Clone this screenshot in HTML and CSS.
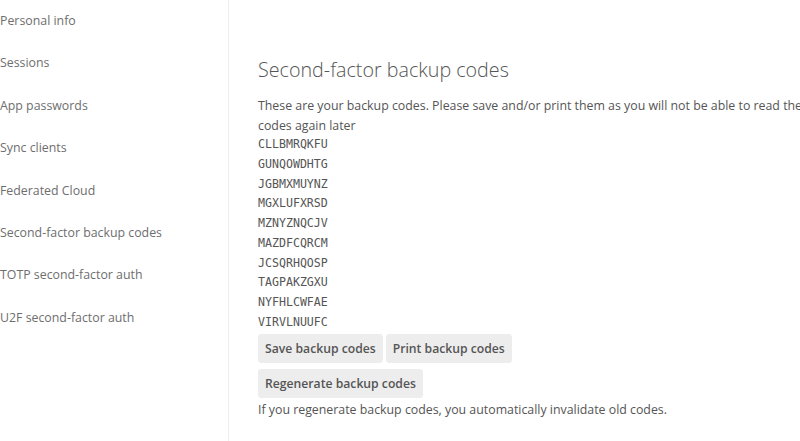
FILE: index.html
```html
<!DOCTYPE html>
<html lang="en">
<head>
  <meta charset="UTF-8">
  <meta name="viewport" content="width=device-width, initial-scale=1.0">
  <title>Personal settings</title>
  <link rel="stylesheet" href="styles.css">
</head>
<body>
  <div class="layout">
    <nav class="app-navigation">
      <ul>
        <li><a href="#">Personal info</a></li>
        <li><a href="#">Sessions</a></li>
        <li><a href="#">App passwords</a></li>
        <li><a href="#">Sync clients</a></li>
        <li><a href="#">Federated Cloud</a></li>
        <li><a href="#">Second-factor backup codes</a></li>
        <li><a href="#">TOTP second-factor auth</a></li>
        <li><a href="#">U2F second-factor auth</a></li>
      </ul>
    </nav>

    <main class="app-content">
      <div class="section">
        <h2>Second-factor backup codes</h2>
        <p class="intro">These are your backup codes. Please save and/or print them as you will not be able to read the codes again later</p>
        <ul class="backup-codes">
          <li>CLLBMRQKFU</li>
          <li>GUNQOWDHTG</li>
          <li>JGBMXMUYNZ</li>
          <li>MGXLUFXRSD</li>
          <li>MZNYZNQCJV</li>
          <li>MAZDFCQRCM</li>
          <li>JCSQRHQOSP</li>
          <li>TAGPAKZGXU</li>
          <li>NYFHLCWFAE</li>
          <li>VIRVLNUUFC</li>
        </ul>
        <div class="button-row">
          <button>Save backup codes</button>
          <button>Print backup codes</button>
        </div>
        <div class="button-row">
          <button>Regenerate backup codes</button>
        </div>
        <p>If you regenerate backup codes, you automatically invalidate old codes.</p>
      </div>
    </main>
  </div>
</body>
</html>
```

FILE: styles.css
```css
body {
  margin: 0;
  font-family: 'Open Sans', 'Liberation Sans', sans-serif;
  font-size: 12.35px;
  color: #555;
  background: #fff;
  overflow: hidden;
}

.layout {
  display: flex;
  min-height: 441px;
}

.app-navigation {
  width: 229px;
  flex-shrink: 0;
  border-right: 1px solid #eee;
  box-sizing: border-box;
}

.app-navigation ul {
  list-style: none;
  margin: 0;
  padding: 0;
}

.app-navigation a {
  display: block;
  line-height: 42.4px;
  color: #6e6e6e;
  text-decoration: none;
}

.app-content {
  flex: 1;
  min-width: 0;
}

.section {
  padding: 55px 0 0 29px;
}

.section h2 {
  margin: 0 0 11px;
  font-size: 19.7px;
  font-weight: 300;
  line-height: 30px;
  color: #555;
}

.section p {
  margin: 0;
  line-height: 20px;
}

.section .intro {
  margin-right: -14px;
}

.backup-codes {
  list-style: none;
  margin: -1px 0 0;
  padding: 0;
  font-family: 'DejaVu Sans Mono', monospace;
  font-size: 11.6px;
  line-height: 19.75px;
  color: #555;
}

.button-row {
  display: flex;
  gap: 3px;
  margin: 1px 0 2px;
}

.button-row + .button-row {
  margin-top: 6px;
}

.button-row button {
  font-family: inherit;
  font-size: 12.2px;
  font-weight: 600;
  color: #555;
  background: #ededed;
  border: 1px solid #ededed;
  border-radius: 3px;
  padding: 0 6px;
  height: 29px;
  cursor: pointer;
}
```
